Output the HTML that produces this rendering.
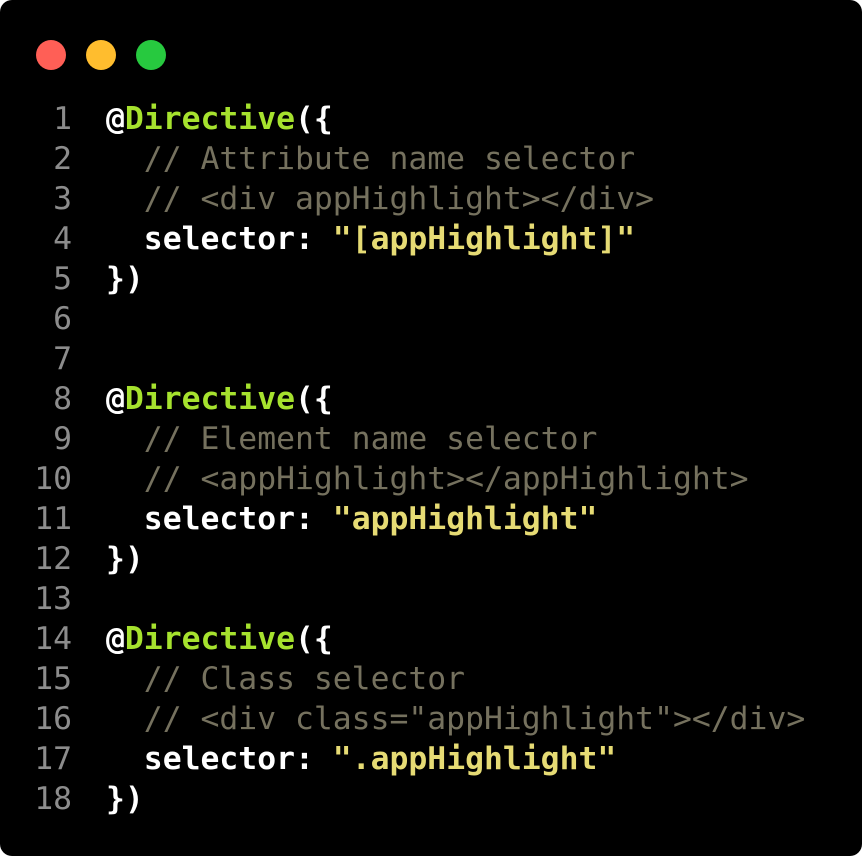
<!DOCTYPE html>
<html><head><meta charset="utf-8"><style>
html,body{margin:0;padding:0;background:#fff;}
.win{position:absolute;left:0;top:0;width:862px;height:856px;background:#000;border-radius:12px;overflow:hidden;}
.dot{position:absolute;top:40px;width:30px;height:30px;border-radius:50%;}
.code{position:absolute;top:99px;left:0;width:862px;font-family:"DejaVu Sans Mono","Liberation Mono",monospace;font-size:31.4px;line-height:40px;color:#f8f8f2;}
.code>div{position:relative;height:40px}
.ln{position:absolute;left:0;width:72px;text-align:right;color:#8c8c8c;}
.tx{position:absolute;left:106px;white-space:pre;}
.g{color:#a6e22e;font-weight:bold}
.c{color:#75715e}
.y{color:#e6db74;font-weight:bold}
.w{color:#fff;font-weight:bold}
</style></head><body>
<div class="win">
<div class="dot" style="left:36px;background:#ff5f56"></div>
<div class="dot" style="left:86px;background:#ffbd2e"></div>
<div class="dot" style="left:136px;background:#27c93f"></div>
<div class="code"><div><span class="ln">1</span><span class="tx"><span class="w">@</span><span class="g">Directive</span><span class="w">({</span></span></div><div><span class="ln">2</span><span class="tx c">  // Attribute name selector</span></div><div><span class="ln">3</span><span class="tx c">  // &lt;div appHighlight&gt;&lt;/div&gt;</span></div><div><span class="ln">4</span><span class="tx"><span class="w">  selector: </span><span class="y">"[appHighlight]"</span></span></div><div><span class="ln">5</span><span class="tx w">})</span></div><div><span class="ln">6</span></div><div><span class="ln">7</span></div><div><span class="ln">8</span><span class="tx"><span class="w">@</span><span class="g">Directive</span><span class="w">({</span></span></div><div><span class="ln">9</span><span class="tx c">  // Element name selector</span></div><div><span class="ln">10</span><span class="tx c">  // &lt;appHighlight&gt;&lt;/appHighlight&gt;</span></div><div><span class="ln">11</span><span class="tx"><span class="w">  selector: </span><span class="y">"appHighlight"</span></span></div><div><span class="ln">12</span><span class="tx w">})</span></div><div><span class="ln">13</span></div><div><span class="ln">14</span><span class="tx"><span class="w">@</span><span class="g">Directive</span><span class="w">({</span></span></div><div><span class="ln">15</span><span class="tx c">  // Class selector</span></div><div><span class="ln">16</span><span class="tx c">  // &lt;div class="appHighlight"&gt;&lt;/div&gt;</span></div><div><span class="ln">17</span><span class="tx"><span class="w">  selector: </span><span class="y">".appHighlight"</span></span></div><div><span class="ln">18</span><span class="tx w">})</span></div></div>
</div>
</body></html>
